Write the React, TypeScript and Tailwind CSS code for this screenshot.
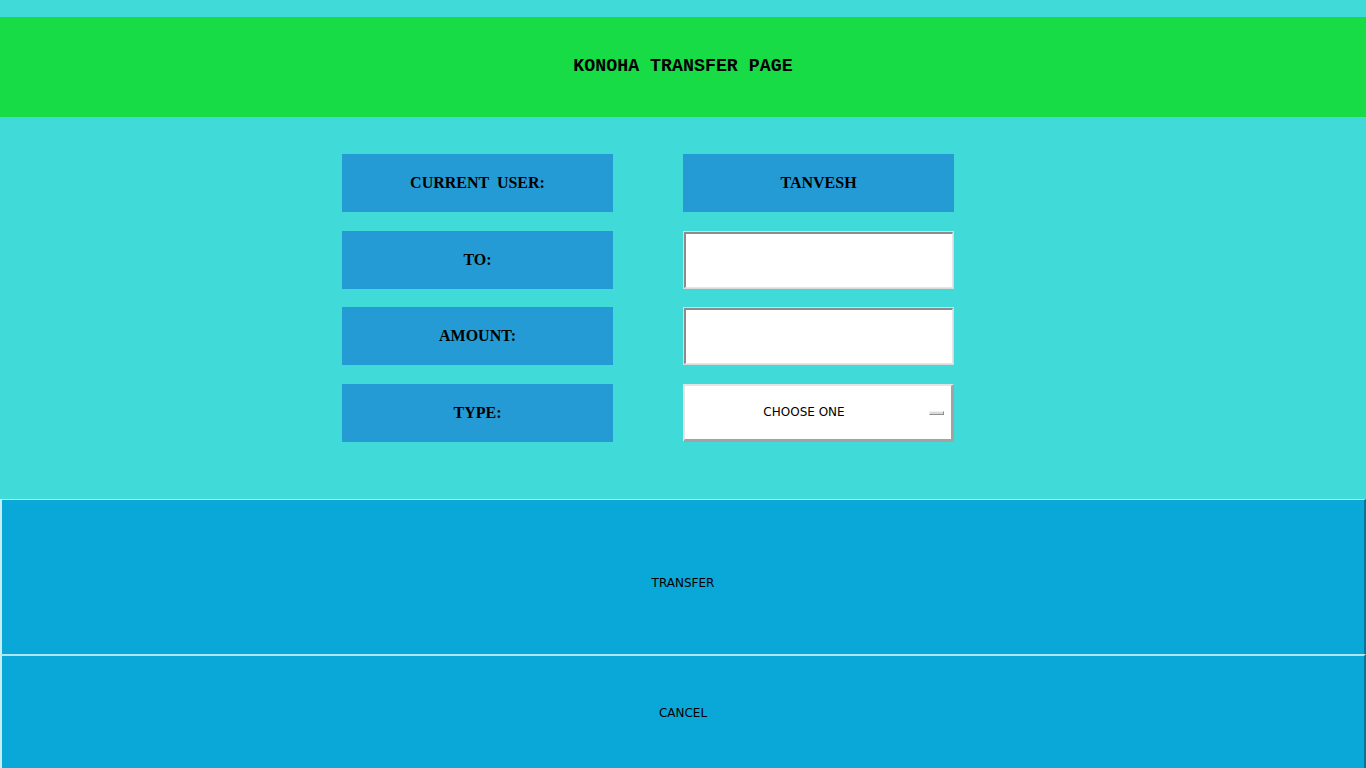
import React from "react";

const rows = ["CURRENT  USER:", "TO:", "AMOUNT:", "TYPE:"];

function Label({ text }: { text: string }) {
  return (
    <div className="w-[271px] h-[58px] bg-[#259bd6] flex items-center justify-center">
      <span className="whitespace-pre font-['Liberation_Serif',serif] font-bold text-[16px] text-black">
        {text}
      </span>
    </div>
  );
}

function Field() {
  return (
    <div className="w-[271px] h-[58px] border border-[#d9d9d9] bg-white">
      <input
        className="w-full h-full bg-white border-t-2 border-l-2 border-b border-r border-t-[#8c8c8c] border-l-[#8c8c8c] border-b-[#e6e6e6] border-r-[#e6e6e6] outline-none px-1 font-['DejaVu_Sans',sans-serif] text-[12px]"
        type="text"
      />
    </div>
  );
}

export default function App() {
  return (
    <div className="w-[1366px] h-[768px] overflow-hidden bg-[#40dbd8] pt-[17px] flex flex-col">
      <div className="h-[100px] shrink-0 bg-[#17dc46] flex items-center justify-center">
        <h1 className="font-['Liberation_Mono',monospace] font-bold text-[18.3px] text-black">
          KONOHA TRANSFER PAGE
        </h1>
      </div>

      <div className="pl-[342px] pt-[37px] h-[382px] shrink-0 flex flex-col gap-[18.5px]">
        <div className="flex gap-[70px]">
          <Label text={rows[0]} />
          <div className="w-[271px] h-[58px] bg-[#259bd6] flex items-center justify-center">
            <span className="font-['Liberation_Serif',serif] font-bold text-[16px] text-black">
              TANVESH
            </span>
          </div>
        </div>
        <div className="flex gap-[70px]">
          <Label text={rows[1]} />
          <Field />
        </div>
        <div className="flex gap-[70px]">
          <Label text={rows[2]} />
          <Field />
        </div>
        <div className="flex gap-[70px]">
          <Label text={rows[3]} />
          <div className="w-[271px] h-[58px] border-t-2 border-l-2 border-b-[3px] border-r-[3px] border-t-[#e4e4e4] border-l-[#e4e4e4] border-b-[#a3a3a3] border-r-[#a3a3a3] bg-white flex items-center">
            <span className="flex-1 text-center pr-[6px] font-['DejaVu_Sans',sans-serif] text-[12px] text-black">
              CHOOSE ONE
            </span>
            <div className="w-[15px] h-[4px] mr-[7px] mt-[1px] border-t border-l border-t-[#f2f2f2] border-l-[#f2f2f2] border-b border-r border-b-[#8f8f8f] border-r-[#8f8f8f] bg-[#d9d9d9]" />
          </div>
        </div>
      </div>

      <button className="h-[155px] shrink-0 bg-[#0aa8d8] border-t border-l-2 border-t-[#c8eef2] border-l-[#c8eef2] border-r-2 border-r-[#07759a] flex items-center justify-center pt-[12px] font-['DejaVu_Sans',sans-serif] text-[12px] text-black">
        TRANSFER
      </button>
      <button className="h-[160px] shrink-0 bg-[#0aa8d8] border-t-2 border-l-2 border-t-[#aee6f2] border-l-[#c8eef2] border-r-2 border-r-[#07759a] flex items-start justify-center pt-[48px] font-['DejaVu_Sans',sans-serif] text-[12px] text-black">
        CANCEL
      </button>
    </div>
  );
}
